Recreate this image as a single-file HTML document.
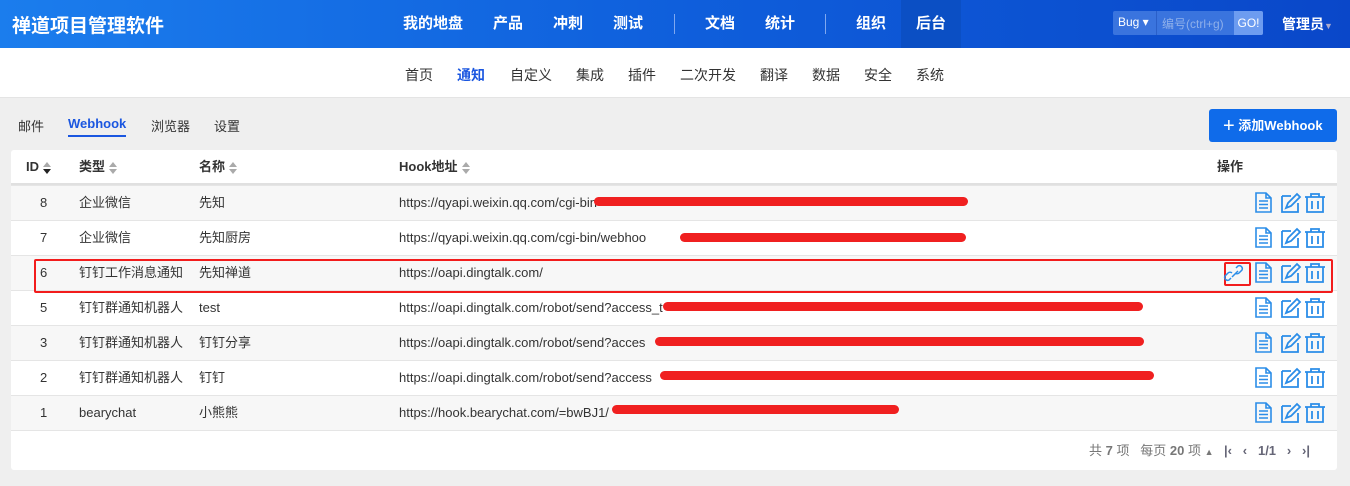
<!DOCTYPE html>
<html><head><meta charset="utf-8"><style>
*{margin:0;padding:0;box-sizing:border-box}
body{width:1350px;height:486px;background:#efefef;font-family:"Liberation Sans","Noto Sans CJK SC",sans-serif;font-size:13px;color:#333;position:relative;overflow:hidden}
.hdr{position:absolute;left:0;top:0;width:1350px;height:48px;background:linear-gradient(90deg,#1b7ded,#0f5fdc 50%,#0a47c9)}
.logo{position:absolute;left:12px;top:11px;color:#fff;font-size:19px;font-weight:bold}
.nav{position:absolute;top:0;height:48px;color:#fff;font-size:15px;font-weight:bold;line-height:48px}
.sep{position:absolute;top:14px;width:1px;height:20px;background:#7fa8f0}
.sub{position:absolute;left:0;top:48px;width:1350px;height:50px;background:#fff;border-bottom:1px solid #e4e4e4}
.sub span{position:absolute;top:17px;font-size:14px;color:#333}
.tab{position:absolute;top:116px;font-size:13px;color:#333}
.card{position:absolute;left:11px;top:150px;width:1326px;height:320px;background:#fff;border-radius:3px}
.row{position:absolute;left:0;width:1326px;height:35px;border-top:1px solid #e5e5e5;font-size:13px;line-height:34px}
.row span{position:absolute}
.g{background:#f7f7f7}
.red{position:absolute;height:9px;background:#f02020;border-radius:5px}
.sort{display:inline-block;vertical-align:middle;margin-left:4px;width:9px;height:12px;position:relative}
.sort:before{content:"";position:absolute;left:0;top:0;border:4.5px solid transparent;border-bottom:5px solid #aaa;border-top:0}
.sort:after{content:"";position:absolute;left:0;top:7px;border:4.5px solid transparent;border-top:5px solid #aaa;border-bottom:0}
.sd:after{border-top-color:#222}
.ic{position:absolute;top:8px}
</style></head><body>
<div class="hdr">
<div class="logo">禅道项目管理软件</div>
<div class="nav" style="left:403px">我的地盘</div>
<div class="nav" style="left:493px">产品</div>
<div class="nav" style="left:553px">冲刺</div>
<div class="nav" style="left:613px">测试</div>
<div class="sep" style="left:674px"></div>
<div class="nav" style="left:705px">文档</div>
<div class="nav" style="left:765px">统计</div>
<div class="sep" style="left:825px"></div>
<div class="nav" style="left:856px">组织</div>
<div style="position:absolute;left:901px;top:0;width:60px;height:48px;background:#0b4fc4"></div>
<div class="nav" style="left:916px">后台</div>
<div style="position:absolute;left:1113px;top:11px;width:150px;height:24px;background:#3a74de;border-radius:2px"></div>
<div style="position:absolute;left:1118px;top:15px;color:#fff;font-size:12px">Bug ▾</div>
<div style="position:absolute;left:1156px;top:11px;width:1px;height:24px;background:#2a5fc8"></div>
<div style="position:absolute;left:1162px;top:15px;color:#8fb0ea;font-size:12px">编号(ctrl+g)</div>
<div style="position:absolute;left:1234px;top:11px;width:29px;height:24px;background:#6d9cf0;color:#fff;font-size:12px;line-height:24px;text-align:center;border-radius:0 2px 2px 0">GO!</div>
<div class="nav" style="left:1282px;font-size:14px">管理员<span style="font-size:9px;color:#aac">▼</span></div>
</div>
<div class="sub">
<span style="left:405px">首页</span><span style="left:457px;color:#1a56e0;font-weight:bold">通知</span><span style="left:510px">自定义</span><span style="left:576px">集成</span><span style="left:628px">插件</span><span style="left:680px">二次开发</span><span style="left:760px">翻译</span><span style="left:812px">数据</span><span style="left:864px">安全</span><span style="left:916px">系统</span>
</div>
<div class="tab" style="left:18px">邮件</div>
<div class="tab" style="left:68px;color:#1a56e0;font-weight:bold">Webhook</div>
<div style="position:absolute;left:68px;top:135px;width:58px;height:2px;background:#1a56e0"></div>
<div class="tab" style="left:151px">浏览器</div>
<div class="tab" style="left:214px">设置</div>
<div style="position:absolute;left:1209px;top:109px;width:128px;height:33px;background:#0f6bea;border-radius:3px;color:#fff;font-size:13px;line-height:33px;font-weight:bold;padding-left:14px"><span style="font-size:20px;font-weight:normal;vertical-align:-2px">+</span> 添加Webhook</div>
<div class="card">
<div style="position:absolute;top:0;left:0;width:1326px;height:35px;font-weight:bold;line-height:34px;border-bottom:2px solid #e0e0e0">
<span style="position:absolute;left:15px">ID<i class="sort sd"></i></span>
<span style="position:absolute;left:68px">类型<i class="sort"></i></span>
<span style="position:absolute;left:188px">名称<i class="sort"></i></span>
<span style="position:absolute;left:388px">Hook地址<i class="sort"></i></span>
<span style="position:absolute;left:1206px">操作</span>
</div>
<!-- rows -->
<div class="row g" style="top:35px"><span style="left:29px">8</span><span style="left:68px">企业微信</span><span style="left:188px">先知</span><span style="left:388px">https://qyapi.weixin.qq.com/cgi-bin</span></div>
<div class="row" style="top:70px"><span style="left:29px">7</span><span style="left:68px">企业微信</span><span style="left:188px">先知厨房</span><span style="left:388px">https://qyapi.weixin.qq.com/cgi-bin/webhoo</span></div>
<div class="row g" style="top:105px"><span style="left:29px">6</span><span style="left:68px">钉钉工作消息通知</span><span style="left:188px">先知禅道</span><span style="left:388px">https://oapi.dingtalk.com/</span></div>
<div class="row" style="top:140px"><span style="left:29px">5</span><span style="left:68px">钉钉群通知机器人</span><span style="left:188px">test</span><span style="left:388px">https://oapi.dingtalk.com/robot/send?access_t</span></div>
<div class="row g" style="top:175px"><span style="left:29px">3</span><span style="left:68px">钉钉群通知机器人</span><span style="left:188px">钉钉分享</span><span style="left:388px">https://oapi.dingtalk.com/robot/send?acces</span></div>
<div class="row" style="top:210px"><span style="left:29px">2</span><span style="left:68px">钉钉群通知机器人</span><span style="left:188px">钉钉</span><span style="left:388px">https://oapi.dingtalk.com/robot/send?access</span></div>
<div class="row g" style="top:245px"><span style="left:29px">1</span><span style="left:68px">bearychat</span><span style="left:188px">小熊熊</span><span style="left:388px">https://hook.bearychat.com/=bwBJ1/</span></div>
<div class="row" style="top:280px;height:40px;line-height:40px;color:#777">
<span style="left:1078px">共 <b>7</b> 项 &nbsp; 每页 <b>20</b> 项 <span style="position:static;font-size:9px">▲</span></span>
<span style="left:1213px;font-weight:bold;color:#667">|‹ &nbsp; ‹ &nbsp; 1/1 &nbsp; › &nbsp; ›|</span>
</div>
</div>
<!-- red marks -->
<div class="red" style="left:594px;top:197px;width:374px"></div>
<div class="red" style="left:680px;top:233px;width:286px"></div>
<div class="red" style="left:663px;top:302px;width:480px"></div>
<div class="red" style="left:655px;top:337px;width:489px"></div>
<div class="red" style="left:660px;top:371px;width:494px"></div>
<div class="red" style="left:612px;top:405px;width:287px"></div>
<div style="position:absolute;left:34px;top:259px;width:1299px;height:34px;border:2px solid #f21c1c;border-radius:2px"></div>
<div style="position:absolute;left:1224px;top:262px;width:27px;height:24px;border:2px solid #f21c1c;border-radius:2px"></div>
<svg width="1350" height="486" style="position:absolute;left:0;top:0" fill="none" stroke="#2b8de8" stroke-width="1.6">
<defs>
<g id="ic">
<path d="M1256 193h10l5 5v14h-15z M1266 193v5h5 M1259 201h9 M1259 204.5h9 M1259 208h9"/>
<path d="M1282 196h9 M1282 196v16h16v-9 M1286 208l2-5 9-9 3 3-9 9z" stroke-width="1.8"/>
<path d="M1305 197h20 M1311 197v-3h8v3 M1307 197v15h16v-15 M1312 201v8 M1318 201v8" stroke-width="1.8"/>
</g>
</defs>
<use href="#ic"/>
<use href="#ic" y="35"/>
<use href="#ic" y="70"/>
<use href="#ic" y="105"/>
<use href="#ic" y="140"/>
<use href="#ic" y="175"/>
<use href="#ic" y="210"/>
<path d="M1231 278l-2 2a3 3 0 0 1-4-4l3-3a3 3 0 0 1 4 0 M1236 268l2-2a3 3 0 0 1 4 4l-3 3a3 3 0 0 1-4 0 M1232 277l6-6" stroke-width="1.5"/>
</svg>
</body></html>
